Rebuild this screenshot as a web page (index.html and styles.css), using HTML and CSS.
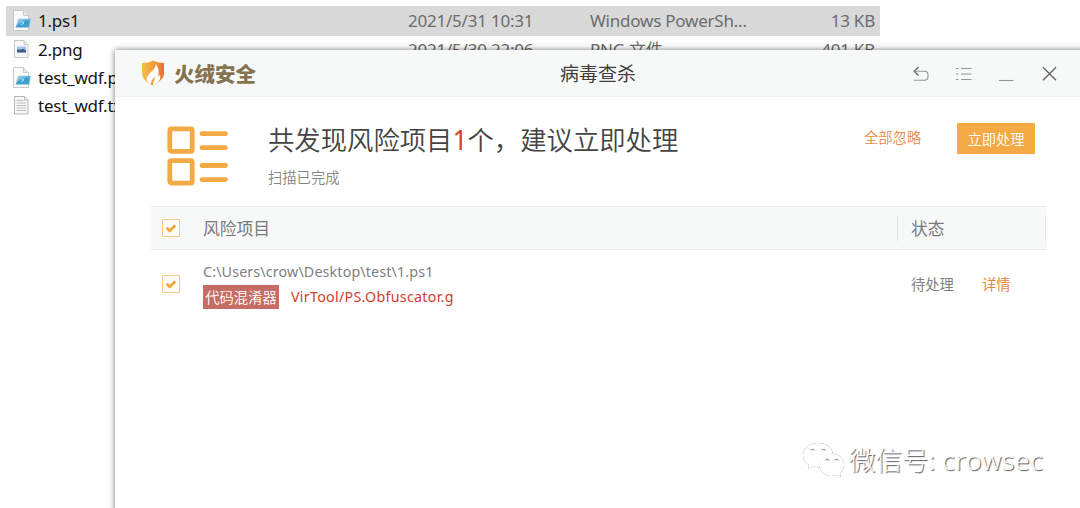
FILE: index.html
```html
<!DOCTYPE html>
<html lang="zh-CN">
<head>
<meta charset="utf-8">
<title>病毒查杀</title>
<link rel="stylesheet" href="styles.css">
</head>
<body>
<svg class="defs" aria-hidden="true">
  <defs>
    <linearGradient id="pic" x1="0" y1="0" x2="1" y2="1"><stop offset="0" stop-color="#a9dff5"/><stop offset=".5" stop-color="#4aa9d6"/><stop offset="1" stop-color="#5cc0e6"/></linearGradient>
    <linearGradient id="flame" x1="0" y1="0" x2="1" y2="0"><stop offset="0" stop-color="#f8bd49"/><stop offset=".5" stop-color="#f3a13c"/><stop offset="1" stop-color="#ea6b2e"/></linearGradient>
    <symbol id="script" viewBox="0 0 20 22">
      <path d="M1.500.5h10l5 5v15h-15z" fill="#fafafa" stroke="#c6c8ca"/>
      <path d="M11.500.5v5h5" fill="#e8eaeb" stroke="#c6c8ca"/>
      <path d="M6.500 9h12l-1.200 8.500H3.800z" fill="url(#pic)" stroke="#a3c5d5" stroke-width=".7"/>
      <path d="M4.500 16l4-3 2 1 3-3 4 1-1 5H4z" fill="#2b8fc0" opacity=".55"/>
      <path d="M9.500 11.500l2.500 1.500-3 2" fill="none" stroke="#d9f0fa" stroke-width=".8"/>
    </symbol>
    <symbol id="image" viewBox="0 0 20 22">
      <path d="M2.500 1.500h9.500l4 4v13h-13.500z" fill="#f8f8f8" stroke="#c8c8c8"/>
      <path d="M12 1.500v4h4" fill="#e8e8e8" stroke="#c8c8c8"/>
      <path d="M5 7.500h9v6H5z" fill="#a5c4ec"/><path d="M5 10.500h4l2-.7 3 1.500v2.200H5z" fill="#3c5f92"/>
    </symbol>
    <symbol id="text" viewBox="0 0 20 22">
      <path d="M2.500 1.500h10l3.500 3.500v14H2.500z" fill="#f7f7f7" stroke="#b5b5b5"/>
      <path d="M12.500 1.500V5H16M4.500 5.500h7M4.500 8h9.500M4.500 10.500h9.500M4.500 13h9.500M4.500 15.500h9.500" fill="none" stroke="#bdbdbd"/>
    </symbol>
  </defs>
</svg>
<div class="files">
  <div class="file selected"><svg class="ficon"><use href="#script"/></svg><span class="name">1.ps1</span><span class="date">2021/5/31 10:31</span><span class="kind">Windows PowerSh...</span><span class="size">13 KB</span></div>
  <div class="file"><svg class="ficon"><use href="#image"/></svg><span class="name">2.png</span><span class="date">2021/5/30 22:06</span><span class="kind">PNG 文件</span><span class="size">401 KB</span></div>
  <div class="file"><svg class="ficon"><use href="#script"/></svg><span class="name">test_wdf.ps1</span></div>
  <div class="file"><svg class="ficon"><use href="#text"/></svg><span class="name">test_wdf.txt</span></div>
</div>

<main class="window">
  <header class="titlebar">
    <div class="brand">
      <svg class="shield" viewBox="0 0 24 26"><path d="M12 .5C9 2.200 5 3 1 3v10c0 5 4 8.500 8 11.500L12 25.500l3-1.500c4-3 8-6 8-11V3c-4 0-8-.8-11-2.500z" fill="url(#flame)"/><path d="M14.800 4c.3 3-1.800 5-4.300 7.500-3.500 3.300-5.500 6-4.500 9.300.5 1.500 2 3 3.500 4 0-3.300 1.500-5.300 4.500-8-.2 3-2 5.200-2 8.700C17 23.500 20.500 19 19 14.500c-.5 1-1 1.500-1.800 2 .8-4.500.6-9-2.400-12.500z" fill="#fff"/></svg>
      <span class="brand-name">火绒安全</span>
    </div>
    <h1 class="title">病毒查杀</h1>
    <div class="controls">
      <svg viewBox="0 0 16 16"><path d="M5.500 1L1.200 5.300l4.300 4.300" stroke="#686868" stroke-width="1.400"/><path d="M1.500 5.300h10q3.500 0 3.500 3.500v2q0 3.500-3.500 3.500H1"/></svg>
      <svg viewBox="0 0 16 16"><path d="M0 2.500h3M0 8h3M0 13.500h3" stroke-dasharray="2 .6"/><path d="M5 2.500h10.500M5 8h10.500M5 13.500h10.500"/></svg>
      <svg viewBox="0 0 16 16"><path d="M0 14.500h14.500"/></svg>
      <svg viewBox="0 0 16 16"><path d="M1 1.300l13 13M14 1.300l-13 13" stroke="#626262" stroke-width="1.300"/></svg>
    </div>
  </header>

  <section class="summary">
    <svg class="scan" viewBox="0 0 62 60"><g fill="none" stroke="#f3aa45" stroke-width="4.800" stroke-linecap="round"><rect x="2.800" y="2.900" width="22.400" height="22.400" rx="1.500"/><rect x="2.800" y="34.700" width="22.400" height="22.400" rx="1.500"/><path d="M35 7.700h23.500M35 21.700h23.500M35 39.500h23.500M35 53.600h23.500"/></g></svg>
    <div class="result">
      <h2>共发现风险项目<em>1</em>个，建议立即处理</h2>
      <p>扫描已完成</p>
    </div>
    <a class="ignore">全部忽略</a>
    <button class="handle">立即处理</button>
  </section>

  <section class="table">
    <div class="thead">
      <span class="check"><svg viewBox="0 0 18 18"><path d="M4.700 8.800l3 3L13.300 6.500"/></svg></span>
      <span class="risk">风险项目</span>
      <span class="status">状态</span>
    </div>
    <div class="item">
      <span class="check"><svg viewBox="0 0 18 18"><path d="M4.700 8.800l3 3L13.300 6.500"/></svg></span>
      <div class="risk">
        <div class="path">C:\Users\crow\Desktop\test\1.ps1</div>
        <div class="threat"><span class="tag">代码混淆器</span><span class="virus">VirTool/PS.Obfuscator.g</span></div>
      </div>
      <span class="state">待处理</span>
      <a class="detail">详情</a>
    </div>
  </section>
</main>

<div class="watermark">
  <svg viewBox="0 0 44 38"><path d="M16 2C8 2 1 7 1 14c0 4.500 2.500 8 6 10l-1 4 5-2.500c2 .5 4 .8 6 .7C17 18 23 12.500 31 12.500 30 6 23.500 2 16 2z"/><path d="M29.500 12.500C22.500 12.500 17 17.500 17 23.500s5.500 11.500 12.500 11.500c1.800 0 3.400-.3 5-.9l4.500 2-1-3.600c2.500-2 4-5 4-9 0-6-5.500-11-12.500-11z"/><path class="eyes" d="M8.500 9.500q2-2.500 4 0M19.500 9.500q2-2.500 4 0M23.500 19.500q1.800-2.300 3.600 0M32.500 19.500q1.800-2.300 3.600 0"/></svg>
  <span class="wm-cn">微信号:</span><span class="wm-en">crowsec</span>
</div>
</body>
</html>
```
FILE: styles.css
```css
* { box-sizing: border-box; }
body {
  margin: 0;
  width: 1080px;
  height: 508px;
  overflow: hidden;
  position: relative;
  background: #fff;
  font-family: "Noto Sans", "Noto Sans CJK SC", sans-serif;
}
.defs { position: absolute; width: 0; height: 0; }

.files { padding: 6px 0 0 6px; width: 880px; }
.file {
  display: grid;
  grid-template-columns: 32px 370px 182px 200px 85px;
  align-items: center;
  height: 28px;
  font-size: 17px;
  letter-spacing: -0.220px;
  line-height: 28px;
  color: #6c6c6c;
  white-space: nowrap;
}
.file:nth-child(n+2) span { padding-top: 1px; }
.selected { height: 30px; margin-bottom: -1px; background: #d9d9d9; }
.ficon { width: 20px; height: 22px; margin-left: 6px; }
.file .name { color: #161616; }
.size { text-align: right; }

.window {
  position: absolute;
  left: 115px;
  top: 50px;
  width: 975px;
  height: 480px;
  background: #fff;
  box-shadow: 0 0 6px rgba(0, 0, 0, 0.55);
}
.titlebar {
  display: flex;
  align-items: center;
  height: 47px;
  background: #f7f9f9;
  border-bottom: 1px solid #eceeee;
}
.brand { display: flex; align-items: center; width: 445px; padding-left: 26px; }
.shield { width: 24px; height: 26px; }
.brand-name {
  margin-left: 9px;
  padding-top: 1px;
  font-size: 20.500px;
  font-weight: 900;
  line-height: 26px;
  color: #857350;
}
.title { margin: 0; padding-top: 2px; width: 352px; font-size: 19px; font-weight: 400; line-height: 26px; color: #3c3c3c; }
.controls { display: flex; gap: 27px; padding-left: 1px; }
.controls svg { width: 16px; height: 16px; margin-top: 1px; fill: none; stroke: #939595; stroke-width: 1.100; }

.summary { display: flex; align-items: flex-start; height: 109px; padding-left: 52px; }
.scan { width: 62px; height: 60px; margin-top: 29px; }
.result { width: 596px; margin-left: 39px; padding-top: 25px; }
.result h2 {
  margin: 0;
  font-size: 26.350px;
  font-weight: 350;
  line-height: 36px;
  color: #444;
}
.result em { font-style: normal; font-weight: 400; color: #d0402c; }
.result p { margin: 10px 0 0; font-size: 14.300px; line-height: 20px; color: #858585; font-weight: 350; }
.ignore { width: 93px; margin-top: 31px; font-size: 14.300px; line-height: 20px; color: #ea8b47; font-weight: 350; }
.handle {
  width: 78px;
  height: 31px;
  margin-top: 25.500px;
  padding: 0;
  border: 0;
  border-radius: 1px;
  background: #f3aa45;
  color: #fff;
  font: 350 14.300px/31px "Noto Sans CJK SC", sans-serif;
}

.table { width: 896px; margin-left: 36px; }
.thead {
  display: flex;
  align-items: center;
  height: 44px;
  padding-left: 11px;
  background: #f7f9f9;
  border-top: 1px solid #eceeee;
  border-bottom: 1px solid #eceeee;
  font-size: 16.800px;
  color: #7a7a7a;
}
.check { width: 18px; height: 18px; margin-right: 23px; border: 1px solid #f8c985; background: #fffdf9; }
.check svg { display: block; width: 18px; height: 18px; margin: -1px; fill: none; stroke: #f3a43a; stroke-width: 2.800; }
.thead .risk { width: 694px; }
.status {
  width: 149px;
  height: 25px;
  padding-left: 13px;
  border-left: 1px solid #e3e5e5;
  border-right: 1px solid #e3e5e5;
  line-height: 25px;
}
.item { display: flex; align-items: center; height: 68px; padding-left: 11px; font-size: 14.300px; color: #808080; }
.item .risk { width: 708px; }
.path { height: 23px; line-height: 20px; letter-spacing: 0.130px; }
.threat { display: flex; align-items: center; height: 24px; margin-bottom: -2px; }
.tag { width: 76px; height: 24px; background: #c76b65; color: #fff; line-height: 25px; text-align: center; font-weight: 350; }
.virus { margin-left: 12px; color: #d3402e; line-height: 24px; padding-top: 1px; letter-spacing: 0.270px; }
.state { width: 71px; margin-top: -2px; }
.detail { margin-top: -2px; color: #e8873b; }

.watermark {
  position: absolute;
  left: 802px;
  top: 440px;
  display: flex;
  align-items: center;
  height: 40px;
  color: #fff;
  font-size: 26.500px;
  font-weight: 300;
  line-height: 40px;
  text-shadow: 1px 1px 1px #555;
}
.watermark svg { width: 44px; height: 38px; fill: #fff; filter: drop-shadow(.7px .8px .6px #555); overflow: visible; }
.watermark .eyes { fill: none; stroke: #999; stroke-width: 1.200; }
.wm-cn { margin-left: 3px; }
.wm-en { margin-left: 7px; letter-spacing: 0.700px; }
```
